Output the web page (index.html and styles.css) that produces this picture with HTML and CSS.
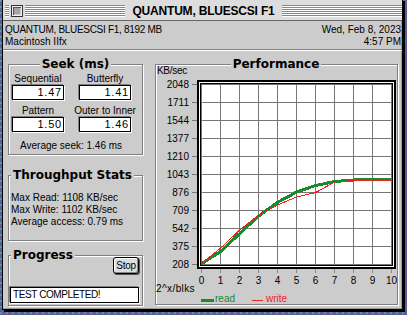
FILE: index.html
```html
<!DOCTYPE html>
<html lang="en">
<head>
<meta charset="utf-8">
<title>QUANTUM, BLUESCSI F1</title>
<link rel="stylesheet" href="styles.css">
</head>
<body>
<div class="window">
  <header class="titlebar">
    <div class="tb-left">
      <span class="stripes stub"></span>
      <span class="closebox"><span class="closebox-in"></span></span>
      <span class="stripes fill"></span>
    </div>
    <h1 class="title">QUANTUM, BLUESCSI F1</h1>
    <span class="stripes"></span>
  </header>

  <div class="info">
    <div class="info-left">
      <div class="drive">QUANTUM, BLUESCSI F1, 8192 MB</div>
      <div>Macintosh IIfx</div>
    </div>
    <div class="info-right">
      <div>Wed, Feb 8, 2023</div>
      <div>4:57 PM</div>
    </div>
  </div>
  <hr class="sep">

  <main class="content">
    <div class="left-col">
      <section class="group seek">
        <h2 class="group-title centered">Seek (ms)</h2>
        <div class="seek-grid">
          <div class="seek-cell"><span class="seek-label">Sequential</span><span class="field value">1.47</span></div>
          <div class="seek-cell"><span class="seek-label">Butterfly</span><span class="field value">1.41</span></div>
          <div class="seek-cell"><span class="seek-label">Pattern</span><span class="field value">1.50</span></div>
          <div class="seek-cell"><span class="seek-label">Outer to Inner</span><span class="field value">1.46</span></div>
        </div>
        <p class="avg">Average seek: 1.46 ms</p>
      </section>

      <section class="group throughput">
        <h2 class="group-title">Throughput Stats</h2>
        <div class="stats">
          <div>Max Read: 1108 KB/sec</div>
          <div>Max Write: 1102 KB/sec</div>
          <div>Average access: 0.79 ms</div>
        </div>
      </section>

      <section class="group progress">
        <div class="progress-head">
          <h2 class="group-title">Progress</h2>
          <button class="stop" type="button">Stop</button>
        </div>
        <div class="field status">TEST COMPLETED!</div>
      </section>
    </div>

    <section class="group perf">
      <h2 class="group-title centered">Performance</h2>
      <div class="perf-body">
        <div class="y-unit">KB/sec</div>
        <div class="y-axis">
          <div class="y-label">2048<i class="tick"></i></div>
          <div class="y-label">1711<i class="tick"></i></div>
          <div class="y-label">1544<i class="tick"></i></div>
          <div class="y-label">1377<i class="tick"></i></div>
          <div class="y-label">1210<i class="tick"></i></div>
          <div class="y-label">1043<i class="tick"></i></div>
          <div class="y-label">876<i class="tick"></i></div>
          <div class="y-label">709<i class="tick"></i></div>
          <div class="y-label">542<i class="tick"></i></div>
          <div class="y-label">375<i class="tick"></i></div>
          <div class="y-label">208<i class="tick"></i></div>
        </div>
        <div class="plot-col">
          <div class="plot-frame">
            <div class="plot-inner">
              <svg viewBox="0 0 191 181" width="191" height="181" shape-rendering="crispEdges">
                <path class="grid" d="M0.5 0V181M19.5 0V181M38.5 0V181M57.5 0V181M76.5 0V181M95.5 0V181M114.5 0V181M133.5 0V181M152.5 0V181M171.5 0V181M190.5 0V181M0 0.5H191M0 18.5H191M0 36.5H191M0 54.5H191M0 72.5H191M0 90.5H191M0 108.5H191M0 126.5H191M0 144.5H191M0 162.5H191M0 180.5H191"/>
                <polyline class="line-read" points="0,180 19.7,167.5 38.7,149.5 57.7,132 76.3,118.5 95.7,108 114.7,101.5 133.7,97.5 152.7,96 171.7,95.3 190.5,95"/>
                <polyline class="line-write" points="0,180 19.7,164 38.7,146 57.7,131 76.3,121 95.7,113 114.7,108.5 133.7,98 152.7,96.5 171.7,96 190.5,96"/>
              </svg>
            </div>
          </div>
          <div class="x-ticks"></div>
        </div>
        <div class="x-unit">2^x/blks</div>
        <div class="x-labels">
          <span>0</span><span>1</span><span>2</span><span>3</span><span>4</span><span>5</span><span>6</span><span>7</span><span>8</span><span>9</span><span>10</span>
        </div>
        <div class="legend">
          <span class="swatch read"></span><span class="legend-text read">read</span>
          <span class="swatch write"></span><span class="legend-text write">write</span>
        </div>
      </div>
    </section>
  </main>
</div>
</body>
</html>
```

FILE: styles.css
```css
* { box-sizing: border-box; }

html, body { margin: 0; padding: 0; }

body {
  width: 407px;
  height: 315px;
  overflow: hidden;
  background-color: #5e5e96;
  background-image: radial-gradient(circle at 1px 1px, #4f9aa6 0.7px, transparent 1px);
  background-size: 6px 6px;
  font-family: "Liberation Sans", Arial, sans-serif;
  font-size: 10px;
  line-height: 12px;
  color: #000;
}

.window {
  margin: -1px 0 0 2px;
  width: 401px;
  height: 311px;
  border: 1px solid #000;
  background: #ccc;
  box-shadow: 2px 2px 0 #000, inset -1px -1px 0 #999;
}

/* ---------- title bar ---------- */
.titlebar {
  display: grid;
  grid-template-columns: 1fr auto 1fr;
  align-items: start;
  height: 21px;
  padding-left: 2px;
  background: #ddd;
  border-bottom: 1px solid #666;
}

.tb-left {
  display: flex;
  align-items: flex-start;
  gap: 2px;
}

.stripes {
  display: block;
  height: 12px;
  margin-top: 5px;
  background: repeating-linear-gradient(to bottom, #888 0 1px, #fff 1px 2px);
}

.stripes.stub { width: 4px; flex: none; }
.stripes.fill { flex: 1; }

.closebox {
  display: block;
  flex: none;
  width: 12px;
  height: 12px;
  margin-top: 5px;
  border: 1px solid #333;
  background: #eee;
  padding: 1px;
}

.closebox-in {
  display: block;
  width: 100%;
  height: 100%;
  background: #a4a4a4;
  box-shadow: inset 1px 1px 0 #555, inset -1px -1px 0 #ccc;
}

.title {
  margin: 0;
  padding: 3px 7px 0;
  font: bold 12px/17px "Liberation Sans", Arial, sans-serif;
  letter-spacing: -0.2px;
  white-space: nowrap;
}

/* ---------- info header ---------- */
.info {
  display: flex;
  justify-content: space-between;
  padding: 3px 1px 0 2px;
}

.info-right { text-align: right; }
.drive { letter-spacing: -0.3px; }

.sep {
  margin: 1px 0 0;
  height: 0;
  border: 0;
  border-top: 1px solid #808080;
  border-bottom: 1px solid #fff;
}

/* ---------- content ---------- */
.content {
  display: flex;
  align-items: flex-start;
  gap: 12px;
  padding: 13px 0 0 5px;
}

.left-col {
  width: 135px;
  display: flex;
  flex-direction: column;
}

.group {
  border: 1px solid #808080;
  box-shadow: 1px 1px 0 #fff, inset 1px 1px 0 #fff;
}

.group-title {
  width: fit-content;
  margin: -8px 0 0 2px;
  padding: 0 2px;
  background: #ccc;
  font: bold 12px/14px "DejaVu Sans", sans-serif;
  white-space: nowrap;
}

.group-title.centered {
  margin-left: auto;
  margin-right: auto;
}

/* seek */
.seek-grid {
  display: grid;
  grid-template-columns: 52px 52px;
  column-gap: 15px;
  row-gap: 5px;
  margin: 2px 0 0 3px;
}

.seek-cell {
  display: flex;
  flex-direction: column;
  align-items: center;
  gap: 1px;
}

.seek-label {
  line-height: 11px;
  white-space: nowrap;
}

.field {
  display: block;
  background: #fff;
  border: 1px solid #000;
  box-shadow: -1px -1px 0 #808080, 1px 1px 0 #fff;
}

.value {
  width: 52px;
  height: 15px;
  padding-right: 1px;
  text-align: right;
  font-size: 11px;
  line-height: 13px;
  letter-spacing: 0.8px;
}

.avg {
  margin: 8px 0 2px 11px;
}

/* throughput */
.throughput { margin-top: 20px; }

.stats {
  margin: 10px 0 12px 2px;
}

/* progress */
.progress { margin-top: 14px; }

.progress-head {
  display: flex;
  justify-content: space-between;
  align-items: flex-start;
  margin-top: -8px;
  padding-right: 3px;
}

.progress-head .group-title { margin-top: 0; }

.stop {
  margin: 9px 0 0;
  padding: 0;
  width: 26px;
  height: 17px;
  font: 10px/15px "Liberation Sans", Arial, sans-serif;
  letter-spacing: -0.3px;
  color: #000;
  background: #ddd;
  border: 1px solid #000;
  border-radius: 3px;
  box-shadow: inset 1px 1px 0 #fff, inset -1px -1px 0 #888, 1px 1px 0 #555;
}

.status {
  height: 16px;
  margin: 13px 3px 2px 1px;
  padding-left: 2px;
  line-height: 14px;
  letter-spacing: -0.4px;
  white-space: nowrap;
}

/* performance */
.perf {
  width: 243px;
  padding-right: 1px;
}

.perf-body {
  display: grid;
  grid-template-columns: 41px 199px;
  grid-template-areas:
    "yunit ."
    "yaxis plot"
    "xunit xlabels"
    "xunit legend";
  margin-top: -5px;
}

.y-unit {
  grid-area: yunit;
  padding-left: 1px;
  font-size: 10px;
  line-height: 9px;
  letter-spacing: -0.3px;
  white-space: nowrap;
}

.y-axis { grid-area: yaxis; }

.y-label {
  display: flex;
  align-items: center;
  justify-content: flex-end;
  height: 18px;
  padding-top: 1px;
}

.tick {
  display: block;
  width: 5px;
  height: 1px;
  margin-left: 3px;
  background: #777;
}

.plot-col {
  grid-area: plot;
  padding-top: 5px;
}

.plot-frame {
  width: 199px;
  border: 2px solid #000;
  padding: 1px;
  background: #fff;
}

.plot-inner {
  border: 1px solid #000;
  background: #fff;
}

.plot-inner svg { display: block; }

.grid {
  fill: none;
  stroke: #777;
  stroke-width: 1;
}

.line-read {
  fill: none;
  stroke: #1a8a2a;
  stroke-width: 3;
}

.line-write {
  fill: none;
  stroke: #f02020;
  stroke-width: 1;
}

.x-ticks {
  width: 191px;
  height: 4px;
  margin-left: 4px;
  background: repeating-linear-gradient(to right, #888 0 1px, transparent 1px 19px);
}

.x-unit {
  grid-area: xunit;
  margin-top: 10px;
  letter-spacing: 0.4px;
  white-space: nowrap;
}

.x-labels {
  grid-area: xlabels;
  display: flex;
  margin: 2px 0 0 -5px;
}

.x-labels span {
  flex: none;
  width: 19px;
  text-align: center;
}

.legend {
  grid-area: legend;
  display: flex;
  align-items: flex-start;
  margin-top: 7px;
  padding-left: 4px;
  line-height: 10px;
}

.swatch { display: block; flex: none; }

.swatch.read {
  width: 13px;
  height: 3px;
  margin: 5px 1px 0 0;
  background: #1a8a2a;
}

.swatch.write {
  width: 11px;
  height: 1px;
  margin: 6px 3px 0 17px;
  background: #f02020;
}

.legend-text.read { color: #1a8a2a; }
.legend-text.write { color: #f02020; }
```
